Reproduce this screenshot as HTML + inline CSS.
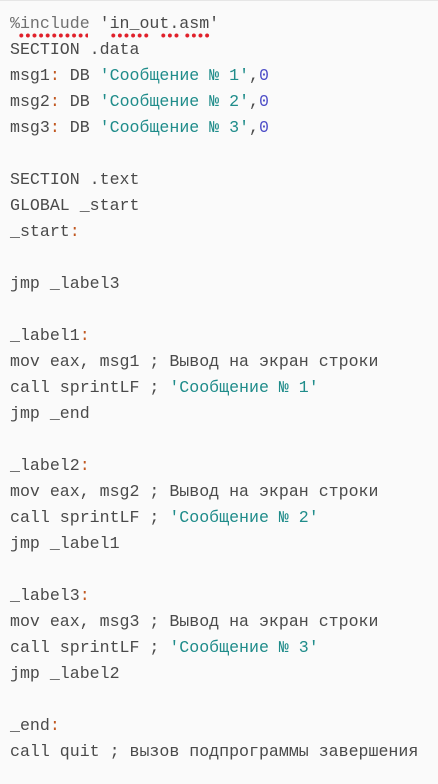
<!DOCTYPE html>
<html><head><meta charset="utf-8"><style>
html,body{margin:0;padding:0;background:#fafafa;width:438px;height:784px;overflow:hidden}
body{border-top:1px solid #e6e6e6;box-sizing:border-box}
pre{margin:0;position:absolute;left:10px;top:11px;font-family:"Liberation Mono","DejaVu Sans Mono",monospace;font-size:16.6px;line-height:26px;color:#4a4a4a}
.c{color:#c0571f}.s{color:#1f8c8a}.n{color:#5050c8}.i{color:#707070}
.sq{position:absolute;top:33px;height:5px;background:radial-gradient(circle,#e0202a 1.8px,transparent 2.2px) 0 0/6.6px 5px repeat-x}
</style></head><body>
<div class="sq" style="left:18px;width:70px"></div>
<div class="sq" style="left:110px;width:40px"></div>
<div class="sq" style="left:160px;width:21px"></div>
<div class="sq" style="left:184px;width:26px"></div>
<pre><span class="i">%include</span> 'in_out.asm'
SECTION .data
msg1<span class="c">:</span> DB <span class="s">'Сообщение № 1'</span>,<span class="n">0</span>
msg2<span class="c">:</span> DB <span class="s">'Сообщение № 2'</span>,<span class="n">0</span>
msg3<span class="c">:</span> DB <span class="s">'Сообщение № 3'</span>,<span class="n">0</span>

SECTION .text
GLOBAL _start
_start<span class="c">:</span>

jmp _label3

_label1<span class="c">:</span>
mov eax, msg1 ; Вывод на экран строки
call sprintLF ; <span class="s">'Сообщение № 1'</span>
jmp _end

_label2<span class="c">:</span>
mov eax, msg2 ; Вывод на экран строки
call sprintLF ; <span class="s">'Сообщение № 2'</span>
jmp _label1

_label3<span class="c">:</span>
mov eax, msg3 ; Вывод на экран строки
call sprintLF ; <span class="s">'Сообщение № 3'</span>
jmp _label2

_end<span class="c">:</span>
call quit ; вызов подпрограммы завершения</pre>
</body></html>
